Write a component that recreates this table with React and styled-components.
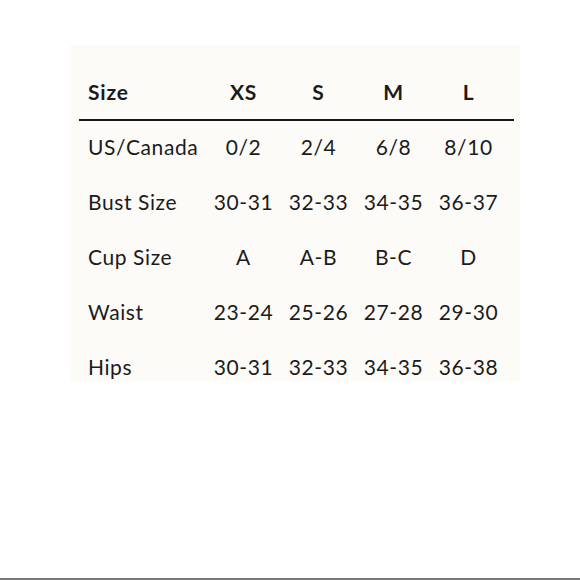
import React from "react";
import styled, { createGlobalStyle } from "styled-components";

const Global = createGlobalStyle`
  html, body { margin: 0; padding: 0; background: #ffffff; }
  body { font-family: Lato, "Open Sans", sans-serif; }
`;

const Page = styled.div`
  box-sizing: border-box;
  height: 580px;
  padding: 45px 60px 0 70px;
  border-bottom: 2px solid #787878;
  background: #ffffff;
`;

const Panel = styled.div`
  width: 450px;
  height: 336px;
  overflow: hidden;
  background: #fdfbf7;
  padding-top: 19px;
  box-sizing: border-box;
`;

const Row = styled.div`
  box-sizing: border-box;
  display: grid;
  grid-template-columns: 118px repeat(4, 75px);
  align-items: center;
  height: 55px;
  padding-left: 18px;
  padding-bottom: ${(p) => (p.$head ? "0" : "4px")};
  color: #1b1b1b;
  font-size: 21px;
  font-weight: ${(p) => (p.$head ? 700 : 400)};
  letter-spacing: ${(p) => (p.$head ? "0.8px" : "0.6px")};
`;

const Label = styled.div`
  white-space: nowrap;
`;

const Cell = styled.div`
  text-align: center;
  white-space: nowrap;
`;

const Rule = styled.div`
  height: 2px;
  margin: 0 6px 0 9px;
  background: #161616;
`;

const head = ["XS", "S", "M", "L"];
const rows = [
  ["US/Canada", "0/2", "2/4", "6/8", "8/10"],
  ["Bust Size", "30-31", "32-33", "34-35", "36-37"],
  ["Cup Size", "A", "A-B", "B-C", "D"],
  ["Waist", "23-24", "25-26", "27-28", "29-30"],
  ["Hips", "30-31", "32-33", "34-35", "36-38"],
];

export default function App() {
  return (
    <>
      <Global />
      <Page>
        <Panel>
          <Row $head>
            <Label>Size</Label>
            {head.map((h) => (
              <Cell key={h}>{h}</Cell>
            ))}
          </Row>
          <Rule />
          {rows.map((r) => (
            <Row key={r[0]}>
              <Label>{r[0]}</Label>
              {r.slice(1).map((v, i) => (
                <Cell key={i}>{v}</Cell>
              ))}
            </Row>
          ))}
        </Panel>
      </Page>
    </>
  );
}
